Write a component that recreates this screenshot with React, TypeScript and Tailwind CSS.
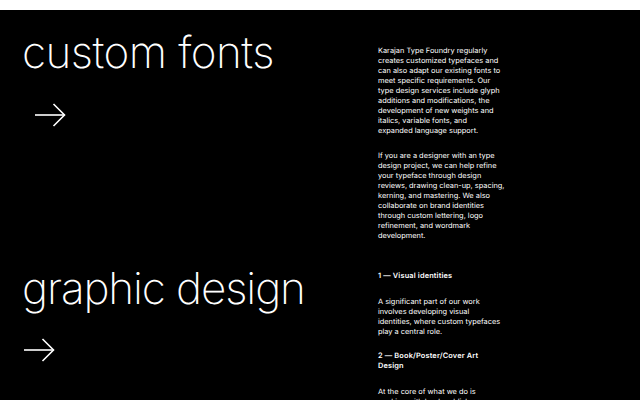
const Arrow = ({ className }: { className: string }) => {
  return (
    <svg viewBox="0 0 32 24" fill="none" stroke="white" strokeWidth="1.6" className={className}>
      <path d="M1 12H30.5" />
      <path d="M19.5 1L30.5 12L19.5 23" />
    </svg>
  );
};

const firstParagraph = [
  "Karajan Type Foundry regularly",
  "creates customized typefaces and",
  "can also adapt our existing fonts to",
  "meet specific requirements. Our",
  "type design services include glyph",
  "additions and modifications, the",
  "development of new weights and",
  "italics, variable fonts, and",
  "expanded language support.",
];

const secondParagraph = [
  "If you are a designer with an type",
  "design project, we can help refine",
  "your typeface through design",
  "reviews, drawing clean-up, spacing,",
  "kerning, and mastering. We also",
  "collaborate on brand identities",
  "through custom lettering, logo",
  "refinement, and wordmark",
  "development.",
];

const thirdParagraph = [
  "A significant part of our work",
  "involves developing visual",
  "identities, where custom typefaces",
  "play a central role.",
];

const Lines = ({ lines, className }: { lines: string[]; className: string }) => {
  return (
    <div className={className}>
      {lines.map((line) => (
        <div key={line}>{line}</div>
      ))}
    </div>
  );
};

export default function App() {
  return (
    <main className="h-[400px] w-[640px] overflow-hidden bg-black text-white font-['Inter',sans-serif] [text-rendering:geometricPrecision]">
      <div className="h-[10px] bg-white" />
      <section className="flex">
        <div className="flex w-[378px] flex-col pl-[22px]">
          <h1 className="mt-[11px] h-[62px] text-[44px] font-extralight leading-[62px] tracking-[-0.55px] whitespace-nowrap">custom fonts</h1>
          <Arrow className="ml-[12px] mt-[20px] h-[24px] w-[32px]" />
          <h1 className="mt-[130px] h-[62px] text-[44px] font-extralight leading-[62px] tracking-[-1.1px] whitespace-nowrap">graphic design</h1>
          <Arrow className="ml-[1px] mt-[19px] h-[24px] w-[32px]" />
        </div>
        <div className="w-[130px] pt-[36px] text-[7.4px] leading-[10px] whitespace-nowrap">
          <Lines lines={firstParagraph} className="" />
          <Lines lines={secondParagraph} className="mt-[15px]" />
          <p className="mt-[30px] font-semibold tracking-[0.15px]">1 — Visual identities</p>
          <Lines lines={thirdParagraph} className="mt-[16px]" />
          <Lines lines={["2 — Book/Poster/Cover Art", "Design"]} className="mt-[14px] font-semibold tracking-[0.15px]" />
          <Lines lines={["At the core of what we do is", "working with book publishers"]} className="mt-[16px]" />
        </div>
      </section>
    </main>
  );
}
